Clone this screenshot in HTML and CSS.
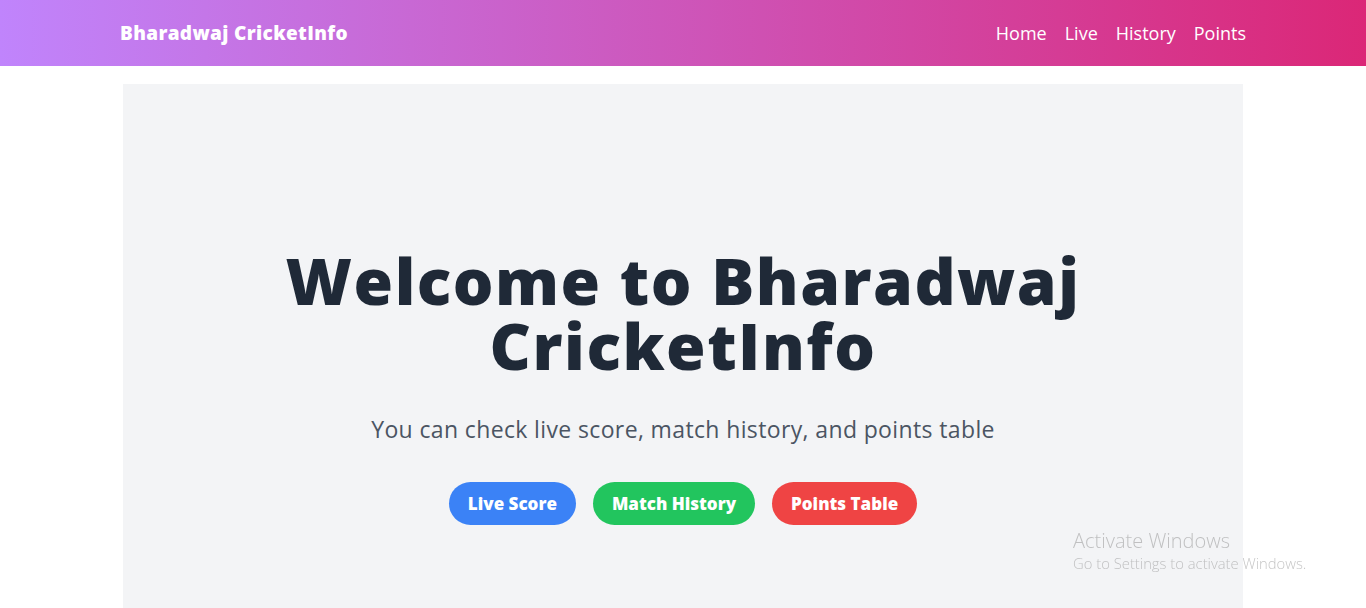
FILE: index.html
```html
<!DOCTYPE html>
<html lang="en">
<head>
<meta charset="utf-8">
<title>Bharadwaj CricketInfo</title>
<link rel="stylesheet" href="styles.css">
</head>
<body>
<header class="topbar">
  <div class="topbar-inner">
    <a class="brand" href="#">Bharadwaj CricketInfo</a>
    <nav class="nav">
      <a href="#">Home</a>
      <a href="#">Live</a>
      <a href="#">History</a>
      <a href="#">Points</a>
    </nav>
  </div>
</header>
<main class="hero">
  <h1 class="hero-title">Welcome to Bharadwaj<br>CricketInfo</h1>
  <p class="hero-sub">You can check live score, match history, and points table</p>
  <div class="actions">
    <a class="btn btn-blue" href="#">Live Score</a>
    <a class="btn btn-green" href="#">Match History</a>
    <a class="btn btn-red" href="#">Points Table</a>
  </div>
</main>
<div class="watermark">
  <div class="wm-title">Activate Windows</div>
  <div class="wm-sub">Go to Settings to activate Windows.</div>
</div>
</body>
</html>
```

FILE: styles.css
```css
html, body {
  margin: 0;
  padding: 0;
  height: 608px;
  overflow: hidden;
  background: #ffffff;
  font-family: "Open Sans", "Noto Sans", sans-serif;
}

a { text-decoration: none; color: inherit; }

.topbar {
  height: 66px;
  background: linear-gradient(90deg, #c084fc 0%, #db2777 100%);
  color: #ffffff;
}

.topbar-inner {
  width: 1126px;
  height: 100%;
  margin: 0 auto;
  display: flex;
  align-items: center;
  justify-content: space-between;
}

.brand {
  font-size: 19px;
  font-weight: 800;
  letter-spacing: 0.35px;
}

.nav {
  display: flex;
  gap: 18px;
  font-size: 18px;
  margin-top: -1px;
}

.hero {
  width: 1120px;
  height: 524px;
  margin: 18px auto 0;
  background: #f3f4f6;
  box-sizing: border-box;
  padding-top: 164px;
  display: flex;
  flex-direction: column;
  align-items: center;
  text-align: center;
}

.hero-title {
  margin: 0;
  font-size: 64px;
  line-height: 65px;
  font-weight: 800;
  color: #1f2937;
  letter-spacing: 1.5px;
}

.hero-sub {
  margin: 35px 0 0;
  font-size: 23px;
  line-height: 32px;
  color: #4b5563;
  letter-spacing: 0.37px;
}

.actions {
  margin-top: 37px;
  display: flex;
  gap: 17px;
}

.btn {
  height: 43px;
  box-sizing: border-box;
  padding: 0 19px;
  border-radius: 22px;
  display: flex;
  align-items: center;
  color: #ffffff;
  font-size: 17px;
  font-weight: 800;
  letter-spacing: 0;
}

.btn-blue { background: #3b82f6; }
.btn-green { background: #22c55e; }
.btn-red { background: #ef4444; }

.watermark {
  position: fixed;
  left: 1073px;
  top: 529px;
  color: rgba(150, 150, 150, 0.55);
  pointer-events: none;
}

.wm-title {
  font-size: 20px;
  line-height: 24px;
  font-weight: 300;
}

.wm-sub {
  font-size: 14.8px;
  line-height: 20px;
  font-weight: 300;
}
```
